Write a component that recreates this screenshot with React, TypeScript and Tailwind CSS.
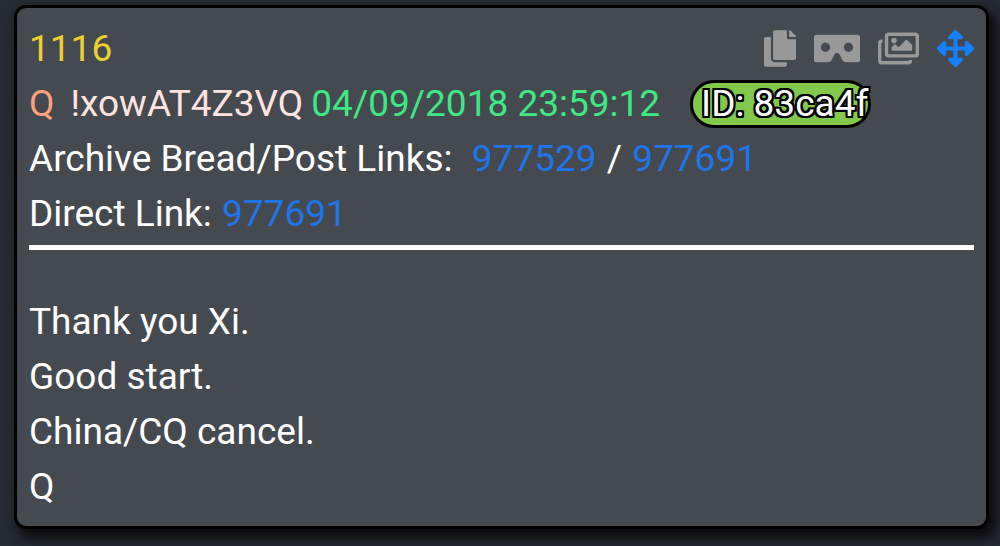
import { FaArrowsAlt, FaCopy, FaRegImages, FaVrCardboard } from "react-icons/fa";

const POST = {
  number: 1116,
  name: "Q",
  trip: "!xowAT4Z3VQ",
  date: "04/09/2018 23:59:12",
  userId: "83ca4f",
  bread: "977529",
  post: "977691",
  lines: ["Thank you Xi.", "Good start.", "China/CQ cancel.", "Q"],
};

// the glyphs share one height but not one width
const ACTIONS = [
  { label: "Copy post", Icon: FaCopy, size: "w-8", color: "text-[#999999]" },
  { label: "Open viewer", Icon: FaVrCardboard, size: "w-[46px]", color: "text-[#999999]" },
  { label: "Show images", Icon: FaRegImages, size: "w-[41px]", color: "text-[#999999]" },
  { label: "Move post", Icon: FaArrowsAlt, size: "w-[37px]", color: "text-[#1480fb]" },
];

function PostLink({ id }: { id: string }) {
  return (
    <a href={`#${id}`} className="px-px text-[#1f75e8]">
      {id}
    </a>
  );
}

function IdBadge({ id }: { id: string }) {
  return (
    <span className="ml-[30px] flex h-12 items-center rounded-full border-3 border-black bg-[#82c94b] pl-2 text-white [text-shadow:2px_0_#000,-2px_0_#000,0_2px_#000,0_-2px_#000,2px_2px_#000,-2px_-2px_#000,2px_-2px_#000,-2px_2px_#000]">
      ID: {id}
    </span>
  );
}

export default function App() {
  return (
    <main className="min-h-screen bg-[#262a33] pt-[5px] pr-[11px] pb-4 pl-[14px] font-['Roboto',sans-serif] text-[37px] leading-[55px] text-white">
      <article className="rounded-xl border-3 border-black bg-[#454950] px-3 pt-[13px] pb-3 shadow-[6px_8px_12px_2px_#0c0c0e]">
        <header>
          <div className="flex items-center justify-between">
            <span className="text-[#ecd02f]">{POST.number}</span>
            <div className="flex items-center gap-[18px]">
              {ACTIONS.map(({ label, Icon, size, color }) => (
                <button key={label} type="button" aria-label={label} className={color}>
                  <Icon className={`h-[37px] ${size}`} />
                </button>
              ))}
            </div>
          </div>

          <div className="flex items-center whitespace-nowrap">
            <span className="mr-4 text-[#fda07c]">{POST.name}</span>
            <span className="mr-2 text-[#fee3e0]">{POST.trip}</span>
            <time className="text-[#3ee882]">{POST.date}</time>
            <IdBadge id={POST.userId} />
          </div>

          <div className="whitespace-pre">
            Archive Bread/Post Links:{"  "}
            <PostLink id={POST.bread} /> / <PostLink id={POST.post} />
          </div>
          <div>
            Direct Link: <PostLink id={POST.post} />
          </div>
        </header>

        <hr className="mt-1 mb-11 border-t-5 border-white" />

        {POST.lines.map((line) => (
          <p key={line}>{line}</p>
        ))}
      </article>
    </main>
  );
}
